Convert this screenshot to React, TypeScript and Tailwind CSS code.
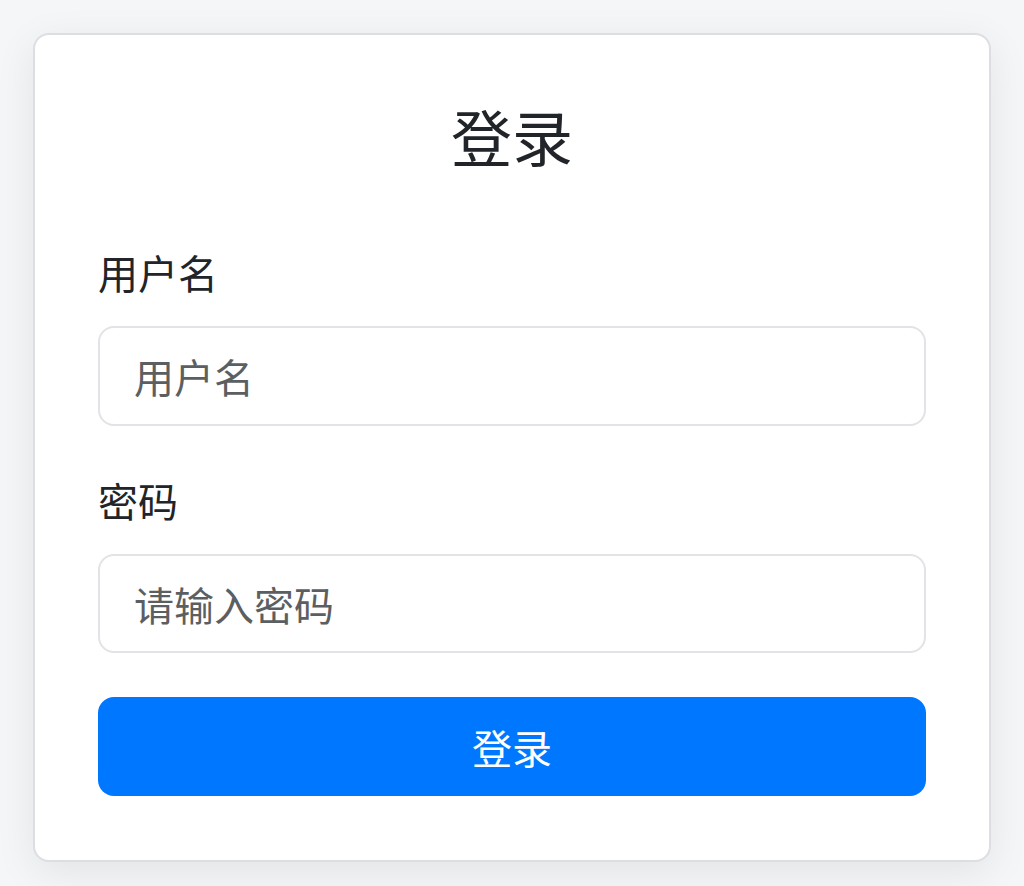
export default function App() {
  return (
    <div
      className="min-h-[886px] bg-[#f5f6f8] p-[33px] text-[#212529]"
      style={{ fontFamily: '"Noto Sans CJK SC", "Noto Sans", sans-serif' }}
    >
      <div className="rounded-[16px] border-2 border-[#dcdee2] bg-white px-[63px] pt-[62px] pb-[64px] shadow-[0_10px_40px_rgba(0,0,0,0.08)]">
        <h2 className="text-center text-[61px] leading-[77px] font-normal">登录</h2>
        <form className="mt-[68px]" onSubmit={(e) => e.preventDefault()}>
          <div className="mb-[44px]">
            <label className="mb-[24px] block text-[40px] leading-[60px]">用户名</label>
            <input
              type="text"
              placeholder="用户名"
              className="block h-[100px] w-full rounded-[16px] border-2 border-[#e1e3e6] bg-white px-[34px] text-[40px] text-[#495057] placeholder:text-[#5c5f62] outline-none"
            />
          </div>
          <div className="mb-[44px]">
            <label className="mb-[24px] block text-[40px] leading-[60px]">密码</label>
            <input
              type="password"
              placeholder="请输入密码"
              className="block h-[99px] w-full rounded-[16px] border-2 border-[#e1e3e6] bg-white px-[34px] text-[40px] text-[#495057] placeholder:text-[#5c5f62] outline-none"
            />
          </div>
          <button
            type="submit"
            className="block h-[99px] w-full rounded-[16px] bg-[#0077ff] text-[40px] text-white"
          >
            登录
          </button>
        </form>
      </div>
    </div>
  )
}
